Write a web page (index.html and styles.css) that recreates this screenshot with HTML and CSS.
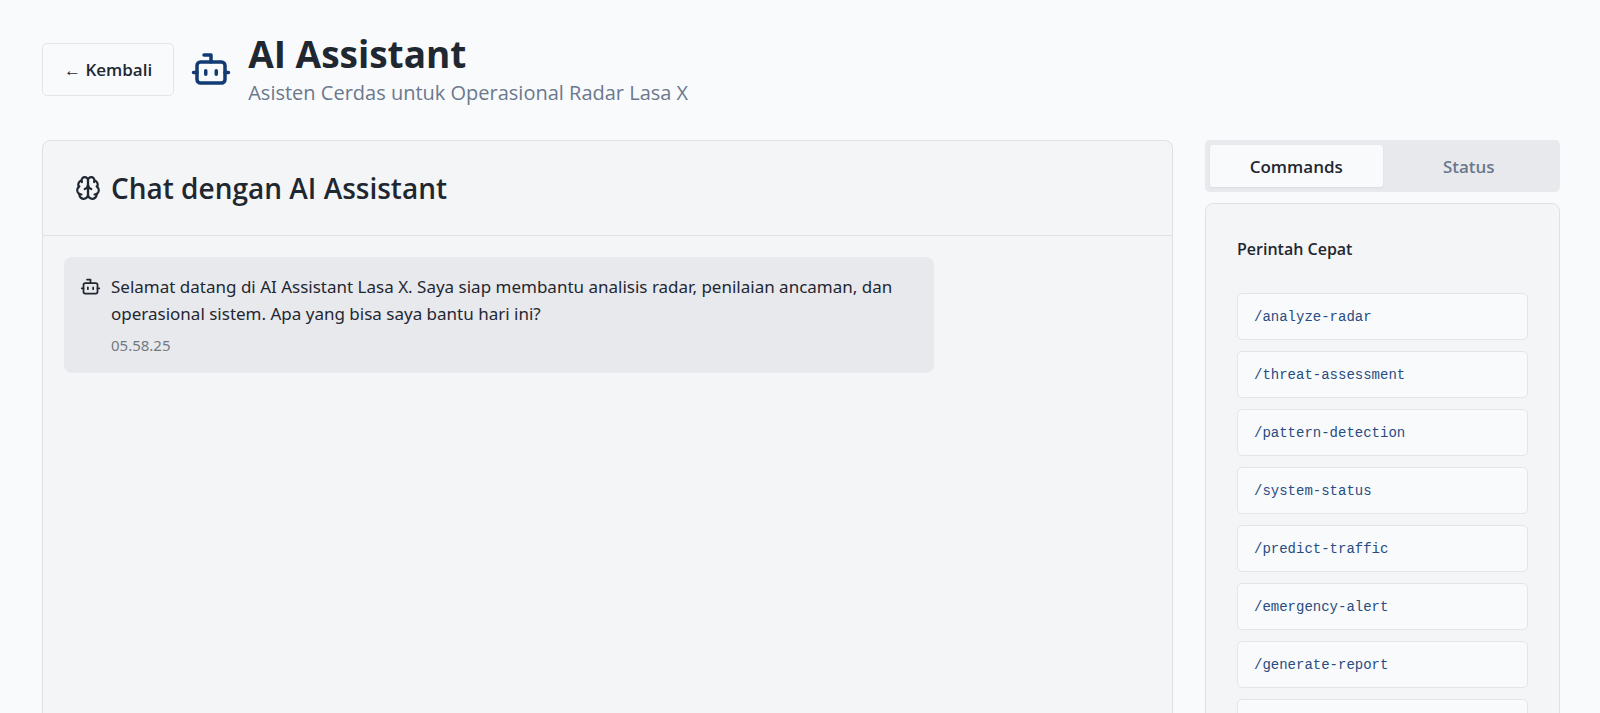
FILE: index.html
```html
<!DOCTYPE html>
<html lang="id">
<head>
<meta charset="utf-8">
<meta name="viewport" content="width=device-width, initial-scale=1">
<title>AI Assistant</title>
<link rel="stylesheet" href="styles.css">
</head>
<body>
<svg class="sprite" aria-hidden="true">
  <symbol id="bot" viewBox="0 0 24 24">
    <path d="M12 8V4H8"/><rect width="16" height="12" x="4" y="8" rx="2"/><path d="M2 14h2M20 14h2M15 13v2M9 13v2"/>
  </symbol>
  <symbol id="brain" viewBox="0 0 24 24">
    <path d="M12 5a3 3 0 1 0-5.997.125 4 4 0 0 0-2.526 5.77 4 4 0 0 0 .556 6.588A4 4 0 1 0 12 18Z"/>
    <path d="M12 5a3 3 0 1 1 5.997.125 4 4 0 0 1 2.526 5.77 4 4 0 0 1-.556 6.588A4 4 0 1 1 12 18Z"/>
    <path d="M15 13a4.5 4.5 0 0 1-3-4 4.5 4.5 0 0 1-3 4M17.599 6.5a3 3 0 0 0 .399-1.375M6.003 5.125A3 3 0 0 0 6.401 6.5M3.477 10.896a4 4 0 0 1 .585-.396M19.938 10.5a4 4 0 0 1 .585.396M6 18a4 4 0 0 1-1.967-.516M19.967 17.484A4 4 0 0 1 18 18"/>
  </symbol>
</svg>
<div class="page">
  <header class="header">
    <button class="back" type="button"><span class="arrow">←</span> Kembali</button>
    <svg class="icon icon-large" aria-hidden="true"><use href="#bot"/></svg>
    <div>
      <h1 class="title">AI Assistant</h1>
      <p class="subtitle">Asisten Cerdas untuk Operasional Radar Lasa X</p>
    </div>
  </header>
  <main class="content">
    <section class="card chat">
      <div class="chat-header">
        <svg class="icon icon-medium" aria-hidden="true"><use href="#brain"/></svg>
        <h2 class="chat-title">Chat dengan AI Assistant</h2>
      </div>
      <div class="messages">
        <article class="message">
          <svg class="icon icon-small" aria-hidden="true"><use href="#bot"/></svg>
          <div>
            <p class="message-text">Selamat datang di AI Assistant Lasa X. Saya siap membantu analisis radar, penilaian ancaman, dan operasional sistem. Apa yang bisa saya bantu hari ini?</p>
            <time class="message-time">05.58.25</time>
          </div>
        </article>
      </div>
    </section>
    <aside class="sidebar">
      <div class="tabs" role="tablist">
        <button class="tab tab-active" type="button" role="tab" aria-selected="true">Commands</button>
        <button class="tab" type="button" role="tab" aria-selected="false">Status</button>
      </div>
      <section class="card commands">
        <h3 class="commands-title">Perintah Cepat</h3>
        <div class="command-list">
          <button class="command" type="button">/analyze-radar</button>
          <button class="command" type="button">/threat-assessment</button>
          <button class="command" type="button">/pattern-detection</button>
          <button class="command" type="button">/system-status</button>
          <button class="command" type="button">/predict-traffic</button>
          <button class="command" type="button">/emergency-alert</button>
          <button class="command" type="button">/generate-report</button>
          <button class="command" type="button"></button>
        </div>
      </section>
    </aside>
  </main>
</div>
</body>
</html>
```
FILE: styles.css
```css
* { box-sizing: border-box; }

body {
  margin: 0;
  background: #f9fafc;
  color: #1f2731;
  font-family: "Segoe UI", "Open Sans", "Noto Sans", sans-serif;
  font-size: 17px;
}

h1, h2, h3, p { margin: 0; }
button { font: inherit; color: inherit; }

.sprite { display: none; }

.page {
  height: 100vh;
  overflow: hidden;
  padding: 30px 40px 0 42px;
}

.header {
  display: flex;
  align-items: center;
  gap: 16px;
  margin-bottom: 32px;
}

.back {
  height: 53px;
  padding: 0 21px;
  border: 1px solid #e4e5e9;
  border-radius: 5px;
  background: #f9fafc;
  font-weight: 600;
}

.arrow { font-weight: 400; }

.icon {
  flex: none;
  fill: none;
  stroke: currentColor;
  stroke-width: 2;
  stroke-linecap: round;
  stroke-linejoin: round;
}

.icon-large { width: 42px; height: 42px; color: #123a73; }
.icon-medium { width: 26px; height: 26px; }
.icon-small { width: 21px; height: 21px; }

.title {
  font-size: 37px;
  font-weight: 700;
  line-height: 48px;
}

.subtitle {
  color: #6b788c;
  font-size: 20px;
  line-height: 30px;
}

.content {
  display: grid;
  grid-template-columns: minmax(0, 1fr) 355px;
  gap: 32px;
}

.card {
  border: 1px solid #dfe1e5;
  border-radius: 8px;
  background: #f4f5f7;
}

.chat-header {
  display: flex;
  align-items: center;
  gap: 10px;
  padding: 24px 32px;
  border-bottom: 1px solid #dfe1e5;
}

.chat-title {
  font-size: 28px;
  font-weight: 600;
  line-height: 46px;
}

.messages { padding: 21px; }

.message {
  display: flex;
  gap: 10px;
  width: 80%;
  padding: 16px;
  border-radius: 8px;
  background: #e8e9ed;
  font-family: "Segoe UI", "Noto Sans", "Open Sans", sans-serif;
}

.message .icon { margin-top: 3px; }

.message-text { line-height: 27px; }

.message-time {
  display: block;
  margin-top: 6px;
  color: #747980;
  font-size: 15px;
  line-height: 24px;
}

.tabs {
  display: grid;
  grid-template-columns: 1fr 1fr;
  margin-bottom: 11px;
  padding: 5px;
  border-radius: 5px;
  background: #e8e9ed;
}

.tab {
  height: 42px;
  padding: 0;
  border: 0;
  border-radius: 3px;
  background: transparent;
  color: #6b788c;
  font-weight: 600;
}

.tab-active {
  background: #f9fafc;
  color: #1f2731;
  box-shadow: 0 1px 2px rgb(0 0 0 / 6%);
}

.commands { padding: 32px 31px; }

.commands-title {
  margin-bottom: 31px;
  font-size: 16px;
  font-weight: 600;
  line-height: 26px;
}

.command-list {
  display: grid;
  gap: 11px;
}

.command {
  height: 47px;
  padding: 0 16px;
  border: 1px solid #e4e5e9;
  border-radius: 5px;
  background: #f9fafc;
  color: #284c80;
  font-family: Consolas, "Liberation Mono", monospace;
  font-size: 14px;
  text-align: left;
}
```
